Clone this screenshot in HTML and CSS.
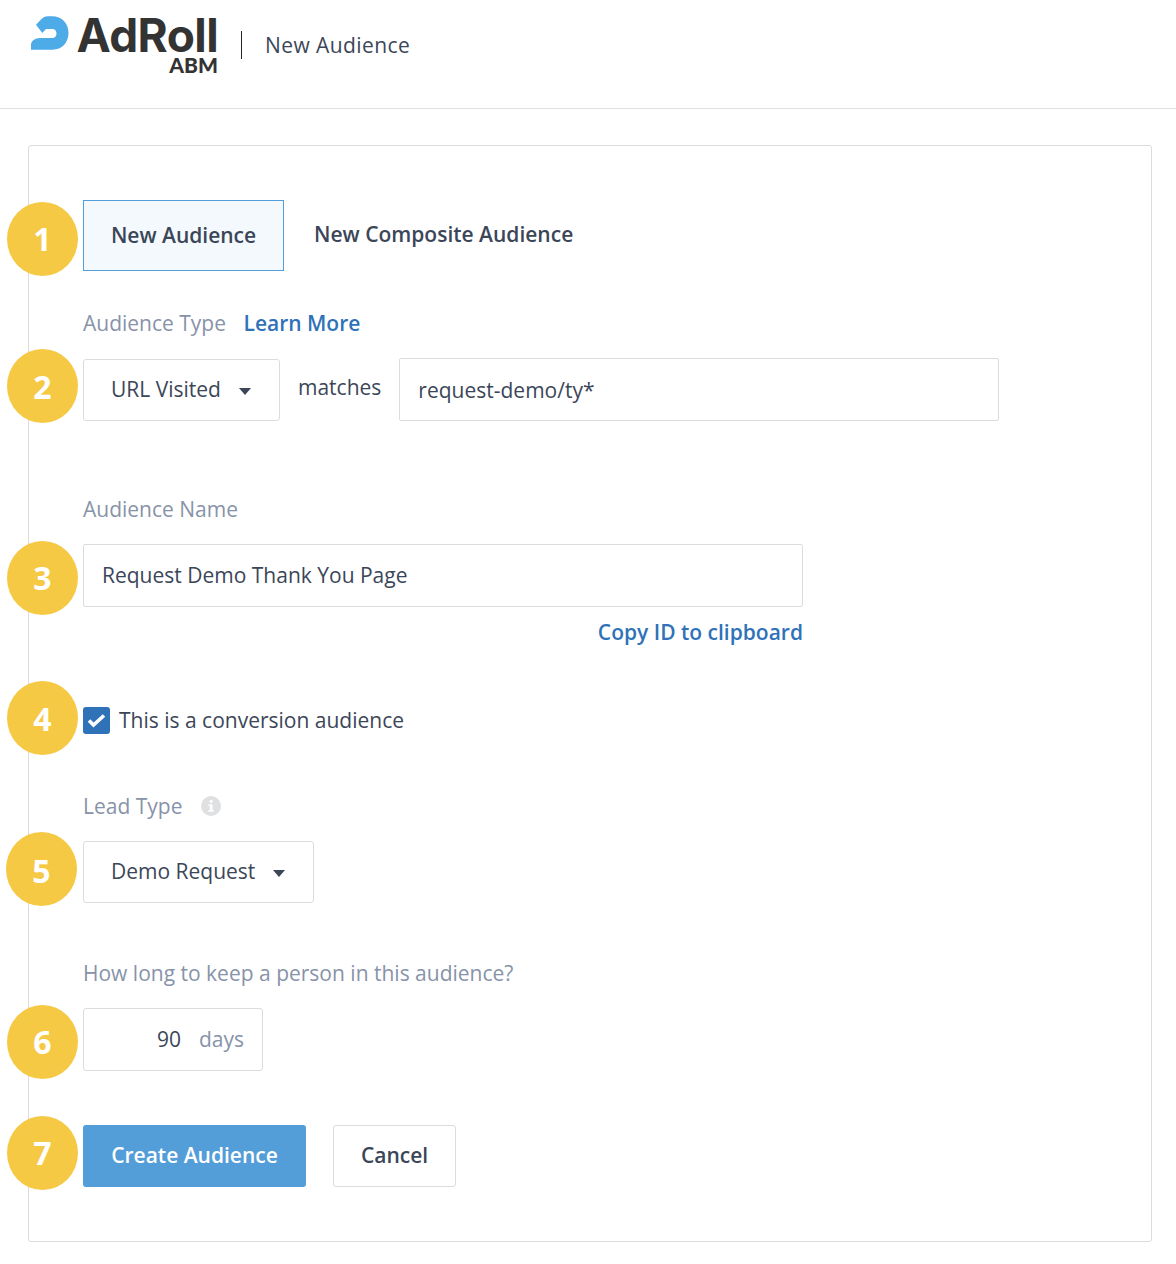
FILE: index.html
```html
<!DOCTYPE html>
<html lang="en">
<head>
<meta charset="utf-8">
<title>New Audience</title>
<link rel="stylesheet" href="styles.css">
</head>
<body>
<header class="topbar">
  <div class="logo">
    <svg class="logo-mark" viewBox="0 0 38 34" width="38" height="34" aria-hidden="true">
      <path fill="#4dabe8" d="M5 8.700L10.500 3C12 1.500 14 .3 17 .3H21C31 .3 37.500 7.500 37.500 17S31 33.700 21.500 33.700H0V29C0 25 4 22 9 22H21.500C23.800 22 25.500 20 25.500 17.500S23.800 13 21.500 13H15L11.300 17Z"/>
    </svg>
    <div class="logo-words">
      <span class="logo-name">AdRoll</span>
      <span class="logo-sub">ABM</span>
    </div>
  </div>
  <span class="divider"></span>
  <span class="page-title">New Audience</span>
</header>

<main class="card">
  <section class="step tabs">
    <span class="badge">1</span>
    <div class="tab tab-active">New Audience</div>
    <div class="tab tab-plain">New Composite Audience</div>
  </section>

  <div class="label label-type">Audience Type <a class="link learn">Learn More</a></div>
  <section class="step type-row">
    <span class="badge">2</span>
    <div class="select select-url">URL Visited <span class="caret"></span></div>
    <span class="matches">matches</span>
    <div class="input input-url">request-demo/ty*</div>
  </section>

  <div class="label label-name">Audience Name</div>
  <section class="step">
    <span class="badge badge-name">3</span>
    <div class="input input-name">Request Demo Thank You Page</div>
  </section>
  <div class="copy-row"><a class="link">Copy ID to clipboard</a></div>

  <section class="step check-row">
    <span class="badge badge-check">4</span>
    <span class="checkbox">
      <svg viewBox="0 0 27 27" width="27" height="27" aria-hidden="true"><path d="M6 13.500L10.500 18L21 8.500" fill="none" stroke="#fff" stroke-width="3.600"/></svg>
    </span>
    <span class="check-text">This is a conversion audience</span>
  </section>

  <div class="label label-lead">Lead Type
    <svg class="info" viewBox="0 0 20 20" width="20" height="20" aria-hidden="true">
      <circle cx="10" cy="10" r="10" fill="#dfe0e2"/>
      <rect x="8.700" y="4" width="2.800" height="2.800" fill="#fff"/>
      <path d="M7.500 8.300H11.500V14H12.800V15.700H7.500V14H8.800V10H7.500Z" fill="#fff"/>
    </svg>
  </div>
  <section class="step">
    <span class="badge badge-lead">5</span>
    <div class="select select-lead">Demo Request <span class="caret"></span></div>
  </section>

  <div class="label label-keep">How long to keep a person in this audience?</div>
  <section class="step">
    <span class="badge badge-days">6</span>
    <div class="days-box"><span class="days-num">90</span><span class="days-unit">days</span></div>
  </section>

  <section class="step actions">
    <span class="badge badge-actions">7</span>
    <button class="btn btn-primary">Create Audience</button>
    <button class="btn btn-cancel">Cancel</button>
  </section>
</main>
</body>
</html>
```

FILE: styles.css
```css
* { box-sizing: border-box; }
html, body { margin: 0; padding: 0; }
body {
  background: #fff;
  color: #3b4658;
  font-family: "Open Sans", "Liberation Sans", sans-serif;
  font-size: 21px;
  line-height: 28px;
  height: 1264px;
  overflow: hidden;
}
.topbar {
  display: flex;
  align-items: flex-start;
  height: 109px;
  border-bottom: 1px solid #e0e0e0;
  padding-left: 31px;
}
.logo { display: flex; align-items: flex-start; margin-top: 16px; }
.logo-mark { display: block; }
.logo-words { display: flex; flex-direction: column; align-items: flex-end; margin-left: 7px; width: 142px; color: #333; }
.logo-name {
  font-family: Inter, "Liberation Sans", sans-serif;
  font-weight: 700;
  font-size: 46px;
  line-height: 36px;
  letter-spacing: -.6px;
  margin-top: 1px;
}
.logo-sub {
  font-family: Lato, "Liberation Sans", sans-serif;
  font-weight: 900;
  font-size: 21px;
  line-height: 20px;
  margin-top: 2px;
}
.divider { width: 1px; height: 28px; background: #222; margin: 31px 0 0 23px; }
.page-title { margin: 31px 0 0 23px; letter-spacing: .42px; }

.card {
  margin: 36px 24px 0 28px;
  height: 1097px;
  border: 1px solid #dcdcdc;
  border-radius: 3px;
  padding: 54px 0 0 54px;
}
.step { position: relative; }
.badge {
  position: absolute;
  left: -76px;
  top: 2px;
  width: 71px;
  height: 74px;
  border-radius: 50%;
  background: #f6c945;
  color: #fff;
  font-weight: 700;
  font-size: 32px;
  line-height: 74px;
  text-align: center;
}
.badge-name { top: -3px; }
.badge-check { top: -25px; line-height: 76px; }
.badge-lead { top: -9px; left: -77px; line-height: 77px; }
.badge-days { top: -3px; }
.badge-actions { top: -9px; }

.tabs { display: flex; align-items: center; height: 71px; }
.tab { font-weight: 600; }
.tab-active {
  width: 201px;
  height: 71px;
  line-height: 69px;
  text-align: center;
  background: #f4f9fd;
  border: 1px solid #539dd8;
}
.tab-plain { margin: -4px 0 0 30px; }

.label { color: #8793a8; }
.label-type { margin-top: 38px; }
.link { color: #2f72b8; font-weight: 600; }
.learn { margin-left: 12px; }

.type-row { display: flex; align-items: flex-start; margin-top: 21px; height: 63px; }
.type-row .badge { top: -9px; line-height: 76px; }
.select {
  height: 62px;
  margin-top: 1px;
  border: 1px solid #dcdcdc;
  border-radius: 3px;
  padding: 0 0 2px 27px;
  display: flex;
  align-items: center;
}
.select-url { width: 197px; margin-right: 18px; }
.select-lead { width: 231px; margin-top: 0; }
.caret {
  width: 0;
  height: 0;
  border-left: 6.500px solid transparent;
  border-right: 6.500px solid transparent;
  border-top: 7px solid #3b4658;
  margin-left: 18px;
  position: relative;
  top: 2px;
}
.matches { line-height: 58px; margin-right: 18px; }
.input {
  height: 63px;
  border: 1px solid #dcdcdc;
  border-radius: 2px;
  padding-left: 18px;
  line-height: 63px;
}
.input-url { width: 600px; }
.input-name { width: 720px; line-height: 61px; }

.label-name { margin-top: 74px; }
.label-name + .step { margin-top: 21px; }
.copy-row { width: 720px; text-align: right; margin-top: 11px; }

.check-row { display: flex; align-items: center; height: 28px; margin-top: 60px; }
.checkbox {
  width: 27px;
  height: 27px;
  border-radius: 3px;
  background: #2f72b8;
  display: flex;
}
.check-text { margin-left: 9px; }

.label-lead { display: flex; align-items: center; margin-top: 58px; }
.info { margin-left: 19px; }
.label-lead + .step { margin-top: 21px; }

.label-keep { margin-top: 56px; }
.label-keep + .step { margin-top: 21px; }
.days-box {
  width: 180px;
  height: 63px;
  border: 1px solid #dcdcdc;
  border-radius: 3px;
  display: flex;
  justify-content: flex-end;
  align-items: center;
  padding: 0 18px 2px 0;
}
.days-num { margin-right: 18px; }
.days-unit { color: #8793a8; }

.actions { display: flex; margin-top: 54px; }
.btn {
  height: 62px;
  font: 600 21px/28px "Open Sans", "Liberation Sans", sans-serif;
  border-radius: 3px;
  padding: 0 0 2px;
}
.btn-primary { width: 223px; background: #539dd8; border: 0; color: #fff; }
.btn-cancel { width: 123px; margin-left: 27px; background: #fff; border: 1px solid #dcdcdc; color: #3b4658; }
```
